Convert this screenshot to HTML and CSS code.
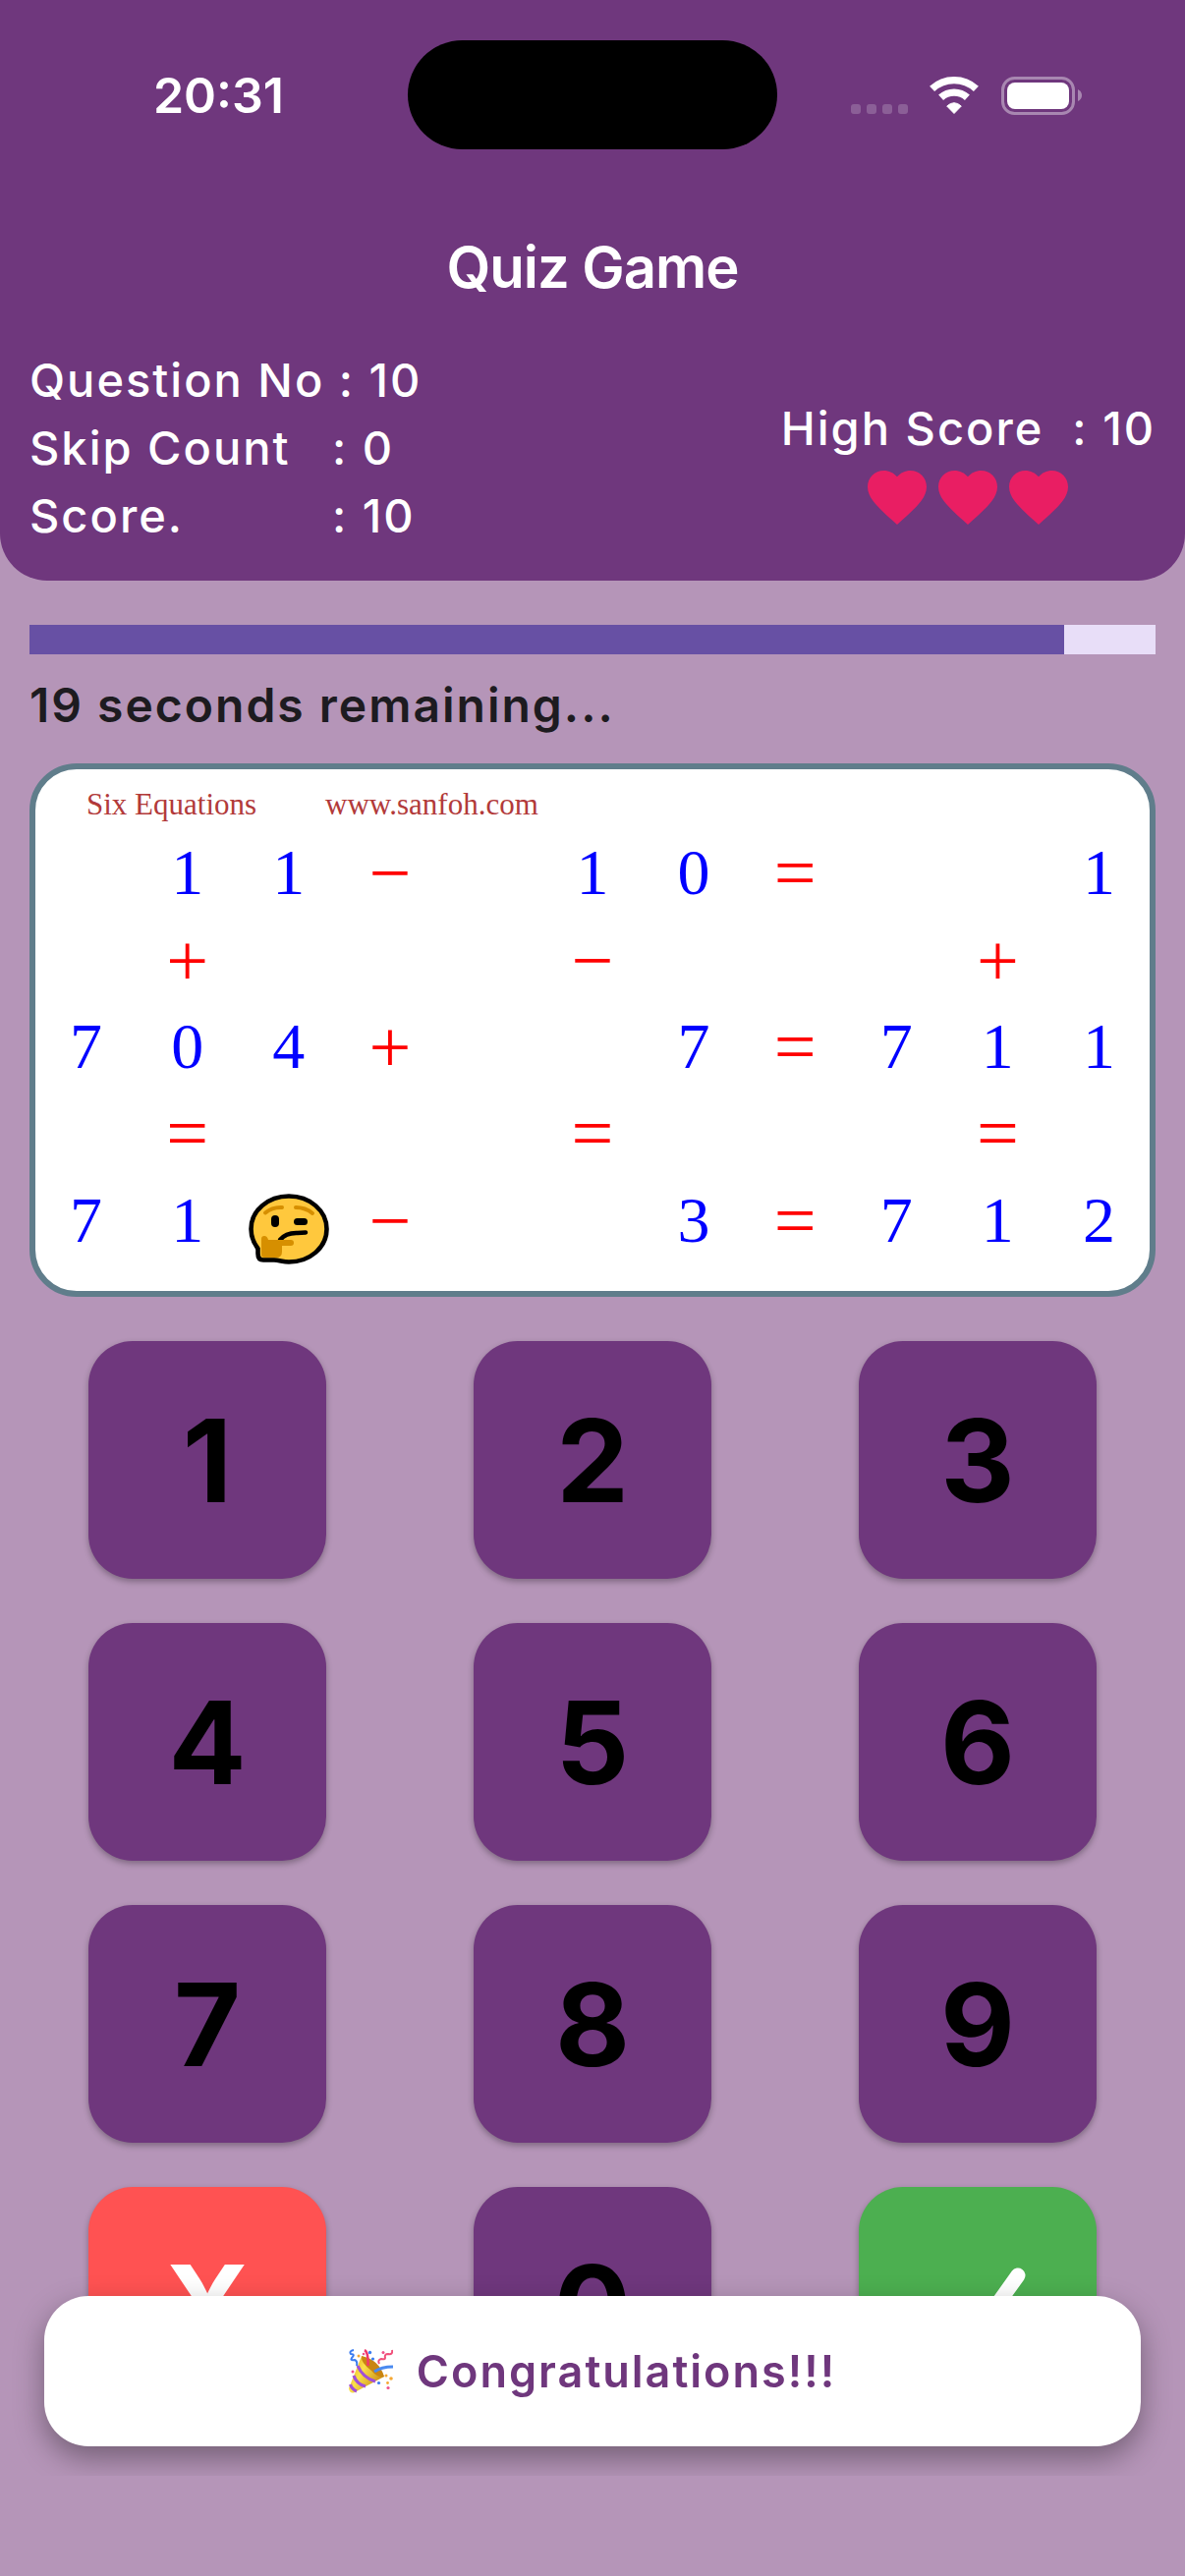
FILE: index.html
```html
<!DOCTYPE html>
<html lang="en">
<head>
<meta charset="utf-8">
<meta name="viewport" content="width=device-width">
<title>Quiz Game</title>
<link rel="stylesheet" href="styles.css">
</head>
<body>
<svg class="defs" aria-hidden="true">
  <symbol id="heart" viewBox="0 0 24 24"><path d="M12 21.35l-1.45-1.32C5.4 15.36 2 12.28 2 8.5 2 5.42 4.42 3 7.5 3c1.74 0 3.41.81 4.5 2.09C13.09 3.81 14.76 3 16.5 3 19.58 3 22 5.42 22 8.5c0 3.78-3.4 6.86-8.55 11.54L12 21.35z"/></symbol>
</svg>

<header class="header">
  <div class="status">
    <time class="clock">20:31</time>
    <div class="island"></div>
    <svg class="indicators" viewBox="0 0 236 40" role="img" aria-label="Wi-Fi on, battery full">
      <g fill="#fff" fill-opacity=".2">
        <rect x="0" y="29" width="10" height="10" rx="3"/>
        <rect x="16" y="29" width="10" height="10" rx="3"/>
        <rect x="32" y="29" width="10" height="10" rx="3"/>
        <rect x="48" y="29" width="10" height="10" rx="3"/>
      </g>
      <g fill="none" stroke="#fff" stroke-width="7.4">
        <path d="M82.600 13.400A33 33 0 0 1 127.400 13.400"/>
        <path d="M91.600 22.300A20 20 0 0 1 118.400 22.300"/>
      </g>
      <path d="M105 38.500L97.700 31Q105 24.400 112.300 31Z" fill="#fff" stroke="#fff" stroke-width="1"/>
      <rect x="154.500" y="2.500" width="72" height="36" rx="12" fill="none" stroke="#fff" stroke-opacity=".4" stroke-width="3"/>
      <rect x="159" y="7" width="63" height="27" rx="8" fill="#fff"/>
      <path d="M231 14Q235 16 235 20T231 26Z" fill="#fff" fill-opacity=".4"/>
    </svg>
  </div>
  <h1 class="title">Quiz Game</h1>
  <div class="stats">
    <ul class="counts">
      <li><span>Question No </span>: 10</li>
      <li><span class="label">Skip Count</span>: 0</li>
      <li><span class="label">Score.</span>: 10</li>
    </ul>
    <div class="best">
      <p class="high">High Score  : 10</p>
      <div class="lives" role="img" aria-label="3 lives left">
        <svg class="heart"><use href="#heart"/></svg>
        <svg class="heart"><use href="#heart"/></svg>
        <svg class="heart"><use href="#heart"/></svg>
      </div>
    </div>
  </div>
</header>

<main class="game">
  <progress class="timer" id="timer" max="1000" value="919"></progress>
  <label class="remaining" for="timer">19 seconds remaining...</label>

  <section class="board" aria-label="Puzzle">
    <div class="credit"><span>Six Equations</span><span>www.sanfoh.com</span></div>
    <i></i><b>1</b><b>1</b><em>−</em><i></i><b>1</b><b>0</b><em>=</em><i></i><i></i><b>1</b>
    <i></i><em>+</em><i></i><i></i><i></i><em>−</em><i></i><i></i><i></i><em>+</em><i></i>
    <b>7</b><b>0</b><b>4</b><em>+</em><i></i><i></i><b>7</b><em>=</em><b>7</b><b>1</b><b>1</b>
    <i></i><em>=</em><i></i><i></i><i></i><em>=</em><i></i><i></i><i></i><em>=</em><i></i>
    <b>7</b><b>1</b>
    <svg class="thinking" viewBox="0 0 82 72" role="img" aria-label="Missing digit">
      <path d="M41 2.500C62 2.500 79.500 17 79.500 36S62 69.500 41 69.500C35 69.500 31 67.500 26 67.500H15C11 67.500 9.500 65 9.500 61V56C5 50 2.500 43 2.500 36C2.500 17 20 2.500 41 2.500Z" fill="#ffc83d" stroke="#000" stroke-width="4.600"/>
      <path d="M17 19.500Q24 13.500 34 14M48 14Q58 14 65 20" fill="none" stroke="#d68f00" stroke-width="4" stroke-linecap="round"/>
      <rect x="23" y="22" width="8" height="12" rx="4"/>
      <rect x="46" y="25" width="14" height="7" rx="3.500"/>
      <path d="M32 47Q38 39.500 50 40L58 39.500" fill="none" stroke="#000" stroke-width="4.500" stroke-linecap="round"/>
      <path d="M13 46Q13 43 16 43Q19 43 20 47H43Q46 47 46 50Q46 53 43 53H34V59Q34 65 28 65H16Q13 65 13 62Z" fill="#d68f00"/>
    </svg>
    <em>−</em><i></i><i></i><b>3</b><em>=</em><b>7</b><b>1</b><b>2</b>
  </section>

  <div class="keypad">
    <button class="key" type="button">1</button>
    <button class="key" type="button">2</button>
    <button class="key" type="button">3</button>
    <button class="key" type="button">4</button>
    <button class="key" type="button">5</button>
    <button class="key" type="button">6</button>
    <button class="key" type="button">7</button>
    <button class="key" type="button">8</button>
    <button class="key" type="button">9</button>
    <button class="key clear" type="button">X</button>
    <button class="key" type="button">0</button>
    <button class="key submit" type="button" aria-label="Submit">
      <svg class="check" viewBox="0 0 120 120" fill="none" stroke="#fff" stroke-width="15" stroke-linecap="round" stroke-linejoin="round"><path d="M22 68L50 100L101 29"/></svg>
    </button>
  </div>
</main>

<div class="snackbar">
  <div class="toast" role="status">
    <svg class="party" viewBox="0 0 45 45" aria-hidden="true">
      <defs><linearGradient id="gold" x1="0" y1="0" x2="1" y2=".6"><stop offset="0" stop-color="#e0a010"/><stop offset=".45" stop-color="#fbe04a"/><stop offset="1" stop-color="#c98a10"/></linearGradient></defs>
      <path d="M13 7L0 40Q1 46 6 44L36 28Q30 13 13 7Z" fill="url(#gold)"/>
      <path d="M13 7Q31 11 36 28Q30 30 23 22Q12 14 13 7Z" fill="#c98512"/>
      <path d="M9 17Q14 29 27 33M5 27Q8 36 17 38M1.500 36Q3 41 8 43" fill="none" stroke="#a04fd8" stroke-width="3.200"/>
      <path d="M16 1Q20 3 19.500 17" fill="none" stroke="#f0386b" stroke-width="2.600"/>
      <path d="M26 23Q33 18 45 18" fill="none" stroke="#4a8af0" stroke-width="3"/>
      <path d="M5 1Q0 2 2 5Q7 5 3 9Q1 12 6 11Q9 12 8 17" fill="none" stroke="#3c7cf0" stroke-width="2"/>
      <path d="M44 1Q45 6 40 5Q36 5 37 9Q37 11 33 10Q29 11 31 15" fill="none" stroke="#f0507a" stroke-width="2"/>
      <g fill="#3c7cf0"><circle cx="21.500" cy="3.500" r="1.700"/><circle cx="24.500" cy="10" r="1.600"/><circle cx="30.500" cy="34.500" r="1.600"/></g>
      <g fill="#f0508a"><circle cx="35" cy="3.500" r="1.500"/><circle cx="4" cy="23" r="1.500"/><circle cx="40" cy="39.500" r="1.600"/><circle cx="15" cy="5" r="1.300"/></g>
      <g fill="#f5a832"><circle cx="43" cy="30" r="1.800"/><circle cx="39.500" cy="34.500" r="1.400"/><circle cx="38" cy="27" r="1.500"/><circle cx="10" cy="7" r="1.500"/></g>
    </svg>
    <span>Congratulations!!!</span>
  </div>
</div>
</body>
</html>
```
FILE: styles.css
```css
:root {
  --purple: #6f377d;
  --lilac: #b595b8;
}

* { box-sizing: border-box; }

body {
  margin: 0;
  min-height: 100vh;
  background: var(--lilac);
  color: #1d1b20;
  font-family: Inter, "Liberation Sans", sans-serif;
}

.defs { display: none; }

/* Header */
.header {
  padding-bottom: 32px;
  background: var(--purple);
  border-radius: 0 0 48px 48px;
  color: #fff;
}

.status {
  display: grid;
  grid-template-columns: 1fr 376px 1fr;
  align-items: center;
  justify-items: center;
  padding: 41px 30px 0;
}

.clock {
  font-size: 50px;
  font-weight: 600;
}

.island {
  width: 100%;
  height: 111px;
  background: #000;
  border-radius: 56px;
}

.indicators {
  width: 236px;
  height: 40px;
}

.title {
  margin: 0;
  padding: 84px 0 44px;
  font-size: 58px;
  font-weight: 600;
  line-height: 72px;
  letter-spacing: -1px;
  text-align: center;
}

.stats {
  display: flex;
  justify-content: space-between;
  align-items: flex-end;
  padding: 0 30px;
  font-size: 47px;
  font-weight: 500;
  line-height: 69px;
  letter-spacing: 2px;
}

.counts {
  margin: 0;
  padding: 0;
  list-style: none;
}

.label {
  display: inline-block;
  width: 308px;
}

.best { padding-bottom: 17px; }

.high {
  margin: 0;
  white-space: pre;
}

.lives {
  display: flex;
  justify-content: center;
}

.heart {
  width: 72px;
  height: 72px;
  fill: #e91e63;
}

/* Timer */
.game { padding: 45px 30px; }

.timer {
  display: block;
  width: 100%;
  height: 30px;
  border: 0;
  background: #e8def8;
  appearance: none;
}

.timer::-webkit-progress-bar { background: #e8def8; }

.timer::-webkit-progress-value { background: #6750a4; }

.remaining {
  display: block;
  padding: 22px 0 29px;
  font-size: 48px;
  font-weight: 600;
  line-height: 60px;
  letter-spacing: 2px;
}

/* Puzzle board */
.board {
  display: grid;
  grid-template-columns: repeat(11, 1fr);
  grid-template-rows: 61px repeat(5, 1fr);
  align-items: center;
  justify-items: center;
  aspect-ratio: 1146 / 543;
  padding-bottom: 28px;
  background: #fff;
  border: 6px solid #607d8b;
  border-radius: 48px;
  font-family: "Liberation Serif", serif;
}

.credit {
  grid-column: 1 / -1;
  justify-self: start;
  display: flex;
  gap: 70px;
  padding: 10px 0 0 52px;
  color: #b23a3a;
  font-size: 31px;
}

.board b,
.board em {
  font-style: normal;
  font-weight: 400;
  line-height: 80px;
}

.board b {
  color: #00f;
  font-size: 66px;
}

.board em {
  color: #f00;
  font-size: 76px;
}

.thinking {
  width: 82px;
  height: 72px;
  margin: 9px 0 -9px;
}

/* Keypad */
.keypad {
  display: grid;
  grid-template-columns: repeat(3, 1fr);
  gap: 45px 0;
  justify-items: center;
  margin: 45px -15px 0;
}

.key {
  display: grid;
  place-items: center;
  width: 242px;
  height: 242px;
  padding: 0;
  border: 0;
  border-radius: 45px;
  background: var(--purple);
  box-shadow: 0 3px 6px rgb(0 0 0 / 30%);
  color: #000;
  font: 700 117px Inter, "Liberation Sans", sans-serif;
}

.clear {
  background: #ff5252;
  color: #fff;
}

.submit { background: #4caf50; }

.check {
  width: 120px;
  height: 120px;
}

/* Snackbar, floating over the keypad */
.snackbar {
  position: fixed;
  right: 0;
  bottom: 102px;
  left: 0;
  overflow: hidden;
  padding: 40px 45px 30px;
}

.toast {
  display: flex;
  align-items: center;
  justify-content: center;
  gap: 24px;
  height: 153px;
  background: #fff;
  border-radius: 45px;
  box-shadow: 0 12px 30px rgb(0 0 0 / 36%);
  color: var(--purple);
  font-size: 45px;
  font-weight: 600;
  letter-spacing: 2px;
}

.party {
  width: 45px;
  height: 45px;
}
```
